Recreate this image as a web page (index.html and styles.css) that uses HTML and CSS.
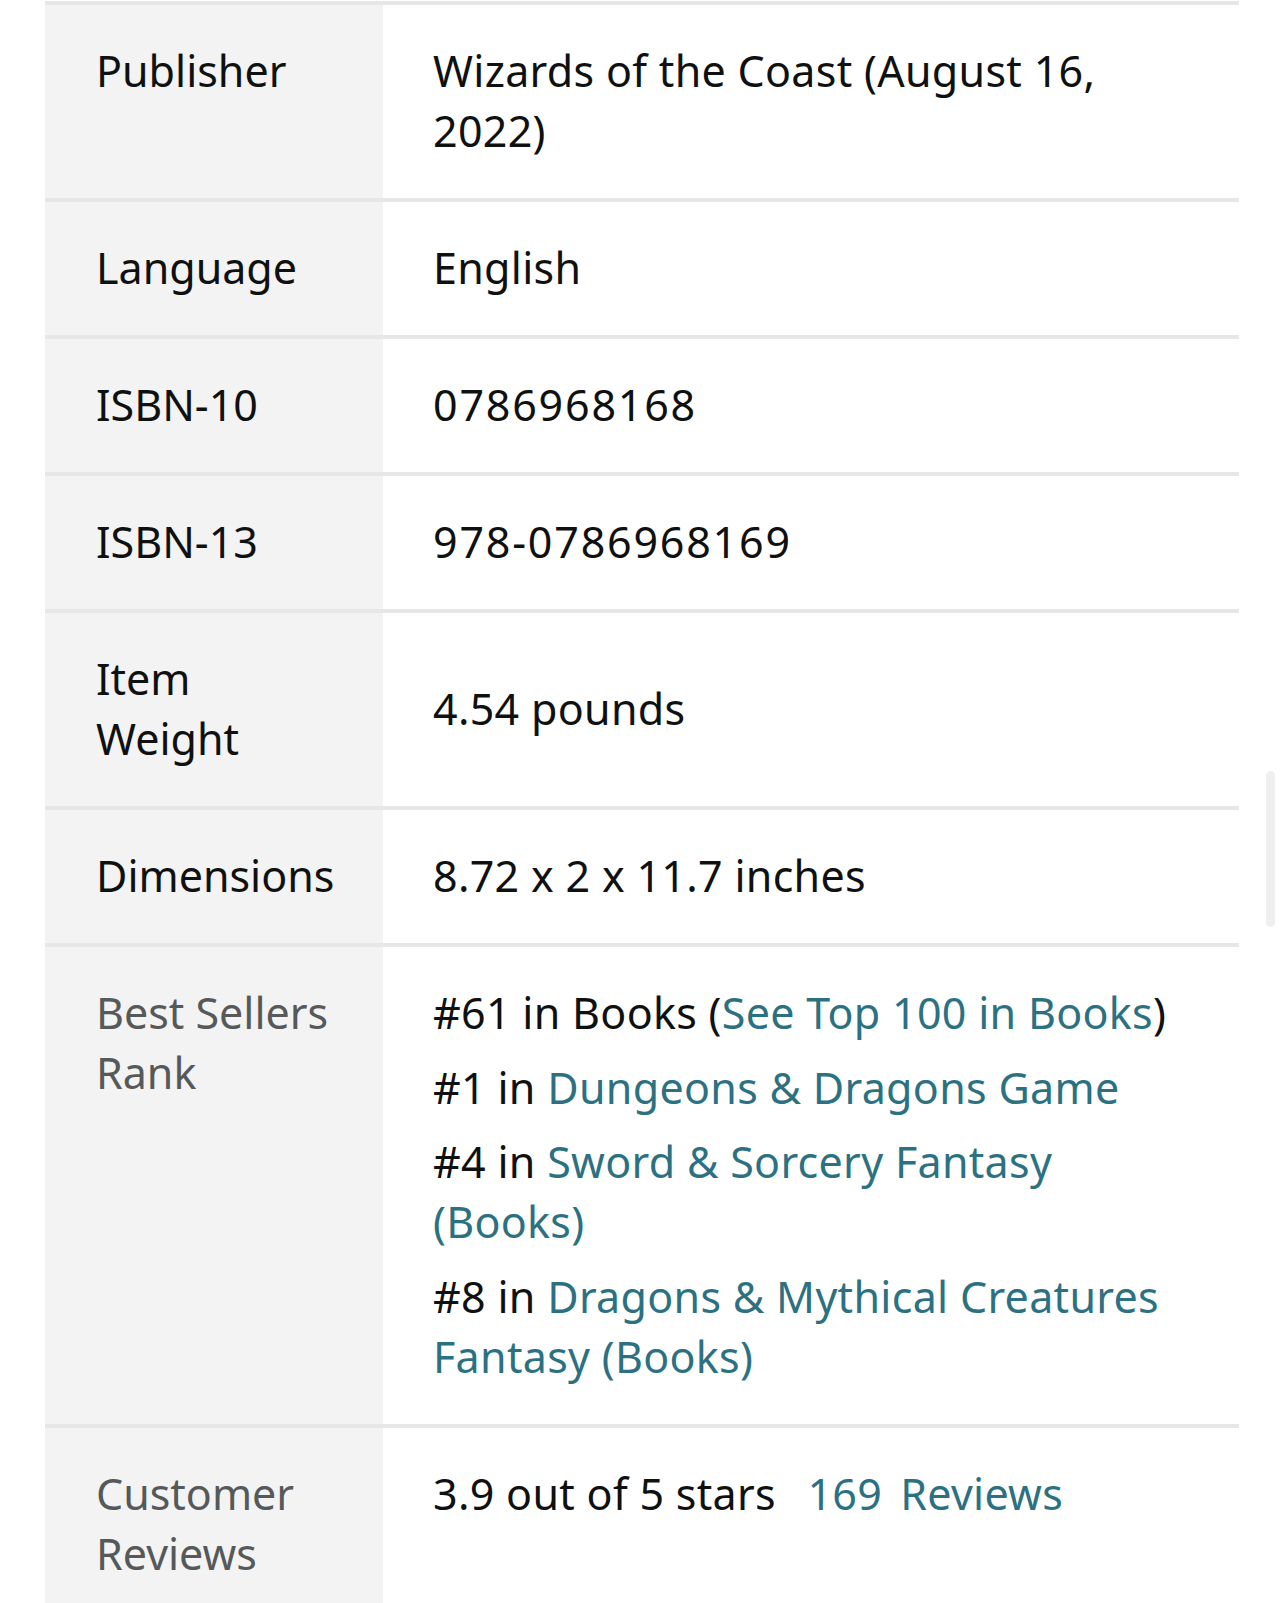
FILE: index.html
```html
<!DOCTYPE html>
<html lang="en">
<head>
  <meta charset="UTF-8">
  <title>Product Details</title>
  <link rel="stylesheet" href="styles.css">
</head>
<body>

  <div class="details">
    <div class="detail-row">
      <div class="label">Publisher</div>
      <div class="value">Wizards of the Coast (August 16, 2022)</div>
    </div>
    <div class="detail-row">
      <div class="label">Language</div>
      <div class="value">English</div>
    </div>
    <div class="detail-row">
      <div class="label">ISBN-10</div>
      <div class="value num">0786968168</div>
    </div>
    <div class="detail-row">
      <div class="label">ISBN-13</div>
      <div class="value num">978-0786968169</div>
    </div>
    <div class="detail-row">
      <div class="label">Item Weight</div>
      <div class="value middle">4.54 pounds</div>
    </div>
    <div class="detail-row">
      <div class="label">Dimensions</div>
      <div class="value">8.72 x 2 x 11.7 inches</div>
    </div>
    <div class="detail-row">
      <div class="label muted">Best Sellers Rank</div>
      <div class="value">
        <ul class="ranks">
          <li>#61 in Books (<a href="#">See Top 100 in Books</a>)</li>
          <li>#1 in <a href="#">Dungeons &amp; Dragons Game</a></li>
          <li>#4 in <a href="#">Sword &amp; Sorcery Fantasy (Books)</a></li>
          <li>#8 in <a href="#">Dragons &amp; Mythical Creatures Fantasy (Books)</a></li>
        </ul>
      </div>
    </div>
    <div class="detail-row">
      <div class="label muted">Customer Reviews</div>
      <div class="value">
        <span>3.9 out of 5 stars</span>
        <a href="#" class="review-count"><span class="count">169</span>Reviews</a>
      </div>
    </div>
  </div>

  <div class="scroll-thumb"></div>

</body>
</html>
```

FILE: styles.css
```css
html, body {
  overflow: hidden;
}

body {
  margin: 0;
  padding: 1px 45px 0 45px;
  font-family: "Noto Sans", "Open Sans", sans-serif;
  font-size: 43px;
  line-height: 60px;
  color: #0f1111;
  background: #fff;
}

.details {
  border-top: 4px solid #e7e7e7;
}

.detail-row {
  display: grid;
  grid-template-columns: 338px 1fr;
  border-bottom: 4px solid #e7e7e7;
}

.label {
  background: #f3f3f3;
  padding: 36px 50px 37px 51px;
}

.label.muted {
  color: #565959;
}

.value {
  padding: 36px 46px 37px 50px;
  letter-spacing: 0.3px;
}

.value.num {
  letter-spacing: 1.8px;
}

.value.middle {
  align-self: center;
}

a {
  color: #2c7182;
  text-decoration: none;
}

.ranks {
  list-style: none;
  margin: 0;
  padding: 0;
}

.ranks li + li {
  margin-top: 14.7px;
}

.review-count {
  margin-left: 20px;
}

.review-count .count {
  margin-right: 18px;
}

.scroll-thumb {
  position: absolute;
  left: 1266px;
  top: 771px;
  width: 9px;
  height: 156px;
  border-radius: 5px;
  background: #efefef;
}
```
